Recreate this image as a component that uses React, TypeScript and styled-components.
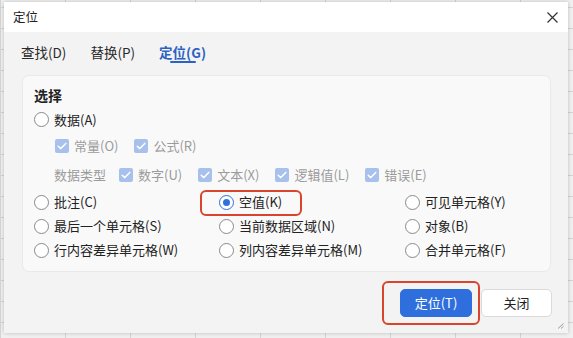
import React from 'react'
import styled, { createGlobalStyle } from 'styled-components'

const GlobalStyle = createGlobalStyle`
  html, body {
    margin: 0;
    padding: 0;
  }
  body {
    width: 573px;
    height: 338px;
    overflow: hidden;
    background-color: #f0f0f0;
    background-image:
      linear-gradient(to right, #d4d4d4 1px, transparent 1px),
      linear-gradient(to bottom, #d4d4d4 1px, transparent 1px);
    background-size: 65px 21px;
    background-position: 0 7px;
    font-family: "Noto Sans CJK SC", "Noto Sans", sans-serif;
    color: #222;
  }
`

const Screen = styled.div`
  padding: 2px 5px 5px 4px;
`

const Dialog = styled.div`
  position: relative;
  width: 564px;
  height: 331px;
  display: flex;
  flex-direction: column;
  background: #f3f3f3;
  box-shadow: 0 0 4px rgba(0, 0, 0, 0.22);
`

const TitleBar = styled.div`
  height: 30px;
  flex: none;
  display: flex;
  align-items: center;
  justify-content: space-between;
  padding: 0 10px 0 9px;
  background: #fff;
  font-size: 12.5px;
  line-height: 16px;
`

const CloseButton = styled.button`
  width: 11px;
  height: 11px;
  padding: 0;
  border: none;
  background: none;
  display: flex;
  svg { display: block; }
`

const Tabs = styled.div`
  display: flex;
  gap: 24px;
  padding: 12px 0 0 17px;
`

const Tab = styled.div<{ $active?: boolean }>`
  display: flex;
  flex-direction: column;
  align-items: center;
  gap: 1px;
  font-size: 13.5px;
  line-height: 16px;
  font-weight: ${p => (p.$active ? 700 : 400)};
  color: ${p => (p.$active ? '#2c62c2' : '#2a2a2a')};
`

const TabBar = styled.div<{ $active?: boolean }>`
  width: 26px;
  height: 2px;
  border-radius: 1px;
  background: ${p => (p.$active ? '#2c62c2' : 'transparent')};
`

const Panel = styled.div`
  margin: 12px 17px 0 18px;
  height: 197px;
  box-sizing: border-box;
  padding: 12px 0 9px 11px;
  background: #f9f9f9;
  border: 1px solid #e9e9e9;
  border-radius: 7px;
  display: flex;
  flex-direction: column;
`

const Heading = styled.div`
  font-size: 14px;
  line-height: 16px;
  font-weight: 700;
  margin: -1px 0 5px;
`

const Row = styled.div<{ $top?: number; $indent?: number }>`
  height: 24px;
  display: flex;
  align-items: center;
  margin-top: ${p => p.$top ?? 0}px;
  padding-left: ${p => p.$indent ?? 0}px;
`

const Option = styled.label`
  position: relative;
  display: flex;
  align-items: center;
  gap: 5px;
  font-size: 13px;
  line-height: 16px;
  white-space: nowrap;
`

const RadioCircle = styled.span<{ $checked?: boolean }>`
  width: 15px;
  height: 15px;
  box-sizing: border-box;
  border-radius: 50%;
  border: 1px solid ${p => (p.$checked ? '#2f6fdd' : '#8a8a8a')};
  background: #fff;
  display: flex;
  align-items: center;
  justify-content: center;
  flex: none;
  &::after {
    content: '';
    width: 7px;
    height: 7px;
    border-radius: 50%;
    background: ${p => (p.$checked ? '#2f6fdd' : 'transparent')};
  }
`

const CheckGroup = styled.div`
  display: flex;
  align-items: center;
  gap: 16px;
`

const CheckOption = styled.label`
  display: flex;
  align-items: center;
  gap: 5px;
  font-size: 13px;
  line-height: 16px;
  color: #9b9b9b;
  white-space: nowrap;
`

const CheckBox = styled.span`
  width: 14px;
  height: 14px;
  border-radius: 2px;
  background: #a7c1ec;
  display: flex;
  align-items: center;
  justify-content: center;
  flex: none;
`

const TypeLabel = styled.span`
  font-size: 13px;
  line-height: 16px;
  color: #9b9b9b;
  margin-right: 13px;
`

const RadioGrid = styled.div`
  display: grid;
  grid-template-columns: 185px 186px 1fr;
  grid-auto-rows: 24px;
  margin-top: 3px;
  align-items: center;
`

const Mark = styled.span<{ $l: number; $t: number; $w: number; $h: number }>`
  position: absolute;
  left: ${p => p.$l}px;
  top: ${p => p.$t}px;
  width: ${p => p.$w}px;
  height: ${p => p.$h}px;
  box-sizing: border-box;
  border: 2px solid #d8452c;
  border-radius: 6px;
  pointer-events: none;
`

const Footer = styled.div`
  display: flex;
  justify-content: flex-end;
  gap: 9px;
  margin-top: 17px;
  padding-right: 16px;
`

const ButtonWrap = styled.div`
  position: relative;
`

const Button = styled.button<{ $primary?: boolean }>`
  width: ${p => (p.$primary ? 72 : 71)}px;
  height: 28px;
  box-sizing: border-box;
  border-radius: 5px;
  border: 1px solid ${p => (p.$primary ? '#2f6fdd' : '#dadada')};
  background: ${p => (p.$primary ? '#2f6fdd' : '#fff')};
  color: ${p => (p.$primary ? '#fff' : '#222')};
  font-family: inherit;
  font-size: 13px;
  line-height: 16px;
  padding: 0;
`

const Grip = styled.svg`
  position: absolute;
  right: 4px;
  bottom: 4px;
`

const Check = () => (
  <CheckBox>
    <svg width="10" height="8" viewBox="0 0 10 8">
      <path d="M1.2 4.2 L3.8 6.6 L8.8 1.4" fill="none" stroke="#fff" strokeWidth="1.5" strokeLinecap="round" strokeLinejoin="round" />
    </svg>
  </CheckBox>
)

const Radio: React.FC<{ label: string; checked?: boolean; children?: React.ReactNode }> = ({ label, checked, children }) => (
  <Option>
    {children}
    <RadioCircle $checked={checked} />
    {label}
  </Option>
)

const CheckItem: React.FC<{ label: string }> = ({ label }) => (
  <CheckOption>
    <Check />
    {label}
  </CheckOption>
)

export default function App() {
  return (
    <>
      <GlobalStyle />
      <Screen>
        <Dialog>
          <TitleBar>
            <span>定位</span>
            <CloseButton>
              <svg width="11" height="11" viewBox="0 0 11 11">
                <path d="M0.5 0.5 L10.5 10.5 M10.5 0.5 L0.5 10.5" stroke="#333" strokeWidth="1.2" />
              </svg>
            </CloseButton>
          </TitleBar>

          <Tabs>
            <Tab>查找(D)<TabBar /></Tab>
            <Tab>替换(P)<TabBar /></Tab>
            <Tab $active>定位(G)<TabBar $active /></Tab>
          </Tabs>

          <Panel>
            <Heading>选择</Heading>
            <Row>
              <Radio label="数据(A)" />
            </Row>
            <Row $top={2} $indent={21}>
              <CheckGroup>
                <CheckItem label="常量(O)" />
                <CheckItem label="公式(R)" />
              </CheckGroup>
            </Row>
            <Row $top={6} $indent={20}>
              <TypeLabel>数据类型</TypeLabel>
              <CheckGroup>
                <CheckItem label="数字(U)" />
                <CheckItem label="文本(X)" />
                <CheckItem label="逻辑值(L)" />
                <CheckItem label="错误(E)" />
              </CheckGroup>
            </Row>
            <RadioGrid>
              <Radio label="批注(C)" />
              <Radio label="空值(K)" checked>
                <Mark $l={-19} $t={-4} $w={102} $h={26} />
              </Radio>
              <Radio label="可见单元格(Y)" />
              <Radio label="最后一个单元格(S)" />
              <Radio label="当前数据区域(N)" />
              <Radio label="对象(B)" />
              <Radio label="行内容差异单元格(W)" />
              <Radio label="列内容差异单元格(M)" />
              <Radio label="合并单元格(F)" />
            </RadioGrid>
          </Panel>

          <Footer>
            <ButtonWrap>
              <Mark $l={-18} $t={-8} $w={98} $h={44} />
              <Button $primary>定位(T)</Button>
            </ButtonWrap>
            <Button>关闭</Button>
          </Footer>

          <Grip width="7" height="6" viewBox="0 0 7 6">
            <path d="M1 5.5 L6.5 0.5 M4 5.5 L6.5 3.2" stroke="#9a9a9a" strokeWidth="1" />
          </Grip>
        </Dialog>
      </Screen>
    </>
  )
}
